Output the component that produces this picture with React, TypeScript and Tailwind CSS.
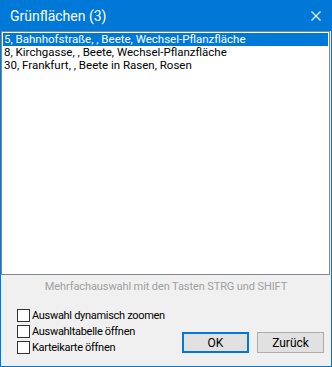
import React from "react";

const rows = [
  "5, Bahnhofstraße, , Beete, Wechsel-Pflanzfläche",
  "8, Kirchgasse, , Beete, Wechsel-Pflanzfläche",
  "30, Frankfurt, , Beete in Rasen, Rosen",
];

const options = ["Auswahl dynamisch zoomen", "Auswahltabelle öffnen", "Karteikarte öffnen"];

const font = { fontFamily: 'Roboto, "Noto Sans", "Liberation Sans", sans-serif' };

export default function App() {
  return (
    <div
      className="w-[332px] h-[367px] bg-[#0078d7] flex flex-col px-px pb-px text-[12px] text-black"
      style={font}
    >
      {/* title bar */}
      <div className="h-[31px] flex items-center justify-between pl-[9px] pr-[10px] text-white">
        <span className="leading-none text-[14px]">Grünflächen (3)</span>
        <svg width="10" height="10" viewBox="0 0 10 10" className="block">
          <path d="M0.5 0.5 L9.5 9.5 M9.5 0.5 L0.5 9.5" stroke="white" strokeWidth="1.1" />
        </svg>
      </div>

      <div className="flex-1 bg-[#f0f0f0] flex flex-col">
        {/* list */}
        <div className="h-[244px] w-[329px] border border-[#828790] bg-white p-px flex flex-col">
          {rows.map((r, i) => (
            <div
              key={r}
              className={
                i === 0
                  ? "h-[13px] bg-[#0078d7] text-white pl-px leading-[13px] whitespace-nowrap text-[11.5px]"
                  : "h-[13px] pl-px leading-[13px] whitespace-nowrap text-[11.5px]"
              }
            >
              {r}
            </div>
          ))}
        </div>

        <div className="h-[24px] flex items-center justify-center text-[#a0a0a0] text-[11px] tracking-[-0.1px]">
          Mehrfachauswahl mit den Tasten STRG und SHIFT
        </div>

        {/* options + buttons */}
        <div className="flex-1 flex items-start pl-[16px] pr-[7px] pt-[10px]">
          <div className="flex flex-col gap-[3px]">
            {options.map((o) => (
              <label key={o} className="flex items-center gap-[2px] h-[13px]">
                <span className="w-[13px] h-[13px] border border-[#333333] bg-white shrink-0" />
                <span className="leading-none whitespace-nowrap text-[11px] tracking-[-0.3px]">{o}</span>
              </label>
            ))}
          </div>
          <div className="ml-auto flex gap-[8px] mt-[23px] shrink-0">
            <button className="w-[67px] h-[21px] border-2 border-[#0078d7] bg-[#e1e1e1] leading-none">
              OK
            </button>
            <button className="w-[67px] h-[21px] border border-[#adadad] bg-[#e1e1e1] leading-none">
              Zurück
            </button>
          </div>
        </div>
      </div>
    </div>
  );
}
